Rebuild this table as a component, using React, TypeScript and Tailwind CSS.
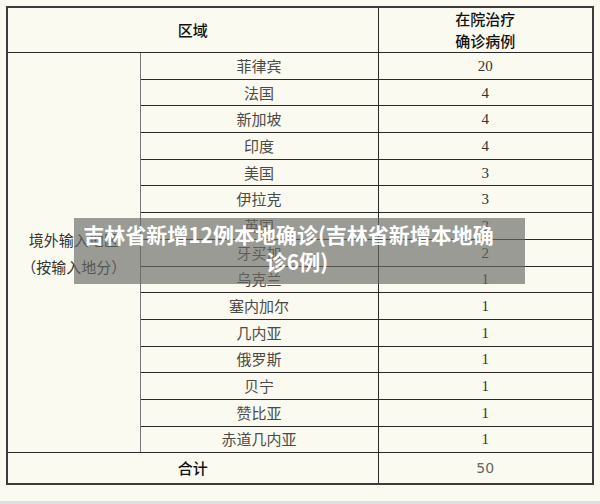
import React from 'react';

const rows: [string, string][] = [
  ['菲律宾', '20'],
  ['法国', '4'],
  ['新加坡', '4'],
  ['印度', '4'],
  ['美国', '3'],
  ['伊拉克', '3'],
  ['英国', '3'],
  ['牙买加', '2'],
  ['乌克兰', '1'],
  ['塞内加尔', '1'],
  ['几内亚', '1'],
  ['俄罗斯', '1'],
  ['贝宁', '1'],
  ['赞比亚', '1'],
  ['赤道几内亚', '1'],
];

const cjk = "font-['Noto_Sans_CJK_SC',sans-serif]";

export default function App() {
  return (
    <div className={`relative w-[600px] h-[504px] bg-[#dfe0df] ${cjk}`}>
      <div className="h-[501px] bg-[#fafaf0] pt-[6px] pl-[6px]">
        <table className="table-fixed border-collapse w-[586px] border-2 border-[#3c3c3c]">
          <colgroup>
            <col className="w-[133px]" />
            <col className="w-[238px]" />
            <col className="w-[215px]" />
          </colgroup>
          <tbody>
            <tr className="h-[43px]">
              <td colSpan={2} className="border border-[#2a2a2a] text-center text-[15px] leading-[20px] text-[#111] font-medium">
                区域
              </td>
              <td className="border border-[#2a2a2a] text-center text-[15px] leading-[22px] text-[#111] font-medium">
                在院治疗
                <br />
                确诊病例
              </td>
            </tr>
            {rows.map(([name, count], i) => (
              <tr key={name} className="h-[26.7px]">
                {i === 0 && (
                  <td rowSpan={15} className="border border-[#2a2a2a] border-r-[#777] text-center text-[15px] leading-[27px] text-[#333]">
                    境外输入地区
                    <br />
                    （按输入地分）
                  </td>
                )}
                <td className="border border-[#2a2a2a] border-l-[#777] text-center text-[15px] leading-[20px] text-[#4a4a4a]">
                  {name}
                </td>
                <td className="border border-[#2a2a2a] text-center text-[15px] leading-[20px] text-[#333] font-['Liberation_Serif',serif]">
                  {count}
                </td>
              </tr>
            ))}
            <tr className="h-[31px]">
              <td colSpan={2} className="border border-[#2a2a2a] text-center text-[15px] text-[#111] font-medium">
                合计
              </td>
              <td className="border border-[#2a2a2a] text-center text-[14px] text-[#666] font-['DejaVu_Sans',sans-serif]">
                50
              </td>
            </tr>
          </tbody>
        </table>
      </div>

      <div className="absolute left-[74px] top-[218px] w-[451px] h-[66px] bg-[rgba(105,105,100,0.65)] pt-[3px] text-white font-bold text-[21px] leading-[27px] whitespace-nowrap">
        <div className="text-center pr-[22px]">吉林省新增12例本地确诊(吉林省新增本地确</div>
        <div className="text-center pr-[5px]">诊6例)</div>
      </div>
    </div>
  );
}
